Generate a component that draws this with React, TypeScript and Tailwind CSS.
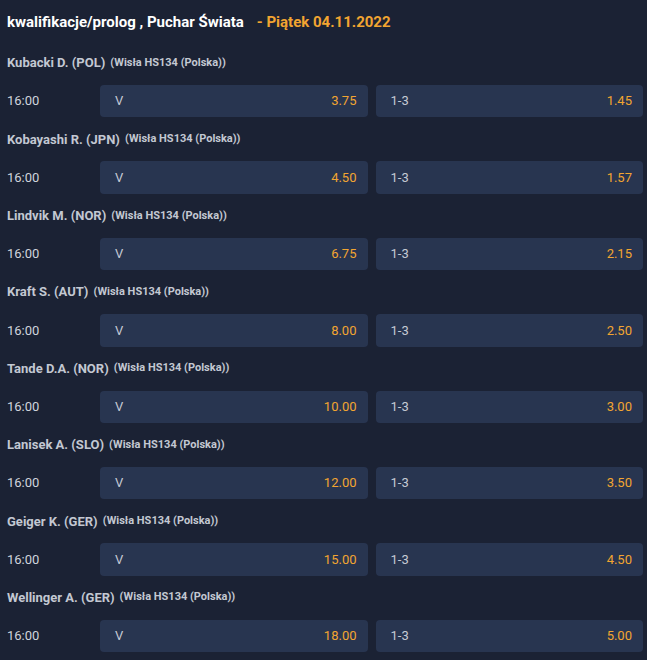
type Jumper = {
  name: string;
  win: string;
  top3: string;
};

const JUMPERS: Jumper[] = [
  { name: "Kubacki D. (POL)", win: "3.75", top3: "1.45" },
  { name: "Kobayashi R. (JPN)", win: "4.50", top3: "1.57" },
  { name: "Lindvik M. (NOR)", win: "6.75", top3: "2.15" },
  { name: "Kraft S. (AUT)", win: "8.00", top3: "2.50" },
  { name: "Tande D.A. (NOR)", win: "10.00", top3: "3.00" },
  { name: "Lanisek A. (SLO)", win: "12.00", top3: "3.50" },
  { name: "Geiger K. (GER)", win: "15.00", top3: "4.50" },
  { name: "Wellinger A. (GER)", win: "18.00", top3: "5.00" },
];

function OddButton({ label, odd }: { label: string; odd: string }) {
  return (
    <button
      type="button"
      className="flex-1 h-[32.4px] flex items-center justify-between pl-[15px] pr-[11px] rounded bg-[#283550] text-[13px]"
    >
      <span className="text-[#c5cad4]">{label}</span>
      <span className="text-[#f2a531]">{odd}</span>
    </button>
  );
}

export default function App() {
  return (
    <div
      className="min-h-screen w-[647px] bg-[#1b2234] px-[7px] overflow-hidden"
      style={{ fontFamily: "Roboto, 'Liberation Sans', sans-serif" }}
    >
      <div className="h-[44px] flex items-center gap-[13px]">
        <h1 className="text-[15px] font-bold text-white">
          kwalifikacje/prolog , Puchar Świata
        </h1>
        <span className="text-[15px] font-bold text-[#f2a531]">
          - Piątek 04.11.2022
        </span>
      </div>
      {JUMPERS.map((j) => (
        <div key={j.name}>
          <div className="h-[38px] flex items-center gap-[5px] font-bold text-[#c3c8d2]">
            <span className="text-[13px]">{j.name}</span>
            <span className="text-[11px]">(Wisła HS134 (Polska))</span>
          </div>
          <div className="h-[38.4px] flex items-center">
            <span className="w-[93px] text-[13px] text-[#d0d4dc]">16:00</span>
            <div className="flex-1 flex gap-[8px] mr-[-3px]">
              <OddButton label="V" odd={j.win} />
              <OddButton label="1-3" odd={j.top3} />
            </div>
          </div>
        </div>
      ))}
    </div>
  );
}
